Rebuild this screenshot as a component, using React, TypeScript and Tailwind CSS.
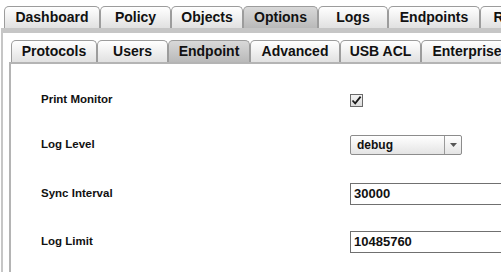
import React from "react";

const top = [
  { t: "Dashboard", w: 96 },
  { t: "Policy", w: 71 },
  { t: "Objects", w: 72 },
  { t: "Options", w: 75, sel: true },
  { t: "Logs", w: 70 },
  { t: "Endpoints", w: 92 },
  { t: "Reports", w: 80 },
];

const sub = [
  { t: "Protocols", w: 86 },
  { t: "Users", w: 71 },
  { t: "Endpoint", w: 82, sel: true },
  { t: "Advanced", w: 90 },
  { t: "USB ACL", w: 81 },
  { t: "Enterprise", w: 92 },
];

function Tab({ t, w, sel }: { t: string; w: number; sel?: boolean }) {
  return (
    <div
      style={{ width: w }}
      className={
        "h-[22px] shrink-0 flex items-center justify-center rounded-t-[5px] border border-b-0 border-[#9c9c9c] text-[14px] font-bold text-[#111] " +
        (sel
          ? "bg-gradient-to-b from-[#d9d9d9] to-[#b9b9b9]"
          : "bg-gradient-to-b from-[#ffffff] to-[#e1e1e1]")
      }
    >
      {t}
    </div>
  );
}

export default function App() {
  return (
    <div className="w-[501px] h-[272px] overflow-hidden bg-white font-['Liberation_Sans',Arial,sans-serif]">
      <div className="w-[760px]">
        <div className="flex pt-[6px] pl-[4px]">
          {top.map((x) => (
            <Tab key={x.t} {...x} />
          ))}
        </div>
        <div className="ml-[1px] border-l-2 border-t-[5px] border-[#c6c6c6] pl-[6px] pt-[7px] h-[260px]">
          <div className="flex pl-[2px]">
            {sub.map((x) => (
              <Tab key={x.t} {...x} />
            ))}
          </div>
          <div className="border-l-2 border-t-2 border-[#b4b4b4] h-[220px] pl-[30px] pt-[24px]">
            <div className="flex flex-col text-[#111]">
              <div className="flex items-center h-[24px]">
                <div className="w-[309px] text-[11.5px] font-bold">Print Monitor</div>
                <div className="w-[13px] h-[13px] border border-[#6a6a6a] bg-gradient-to-b from-[#f4f4f4] to-[#dcdcdc] flex items-center justify-center">
                  <svg width="11" height="11" viewBox="0 0 11 11">
                    <path d="M1.5 5.5 L4.2 8.3 L9.6 1.6" fill="none" stroke="#1a1a1a" strokeWidth="1.8" />
                  </svg>
                </div>
              </div>
              <div className="flex items-center h-[24px] mt-[21px]">
                <div className="w-[309px] text-[11.5px] font-bold">Log Level</div>
                <div className="w-[112px] h-[20px] border border-[#8c8c8c] rounded-[2px] bg-gradient-to-b from-[#ffffff] to-[#e4e4e4] flex items-center">
                  <div className="w-[94px] pl-[6px] text-[12px] font-bold border-r border-[#9a9a9a] h-full flex items-center">debug</div>
                  <div className="flex-1 flex items-center justify-center">
                    <svg width="7" height="4" viewBox="0 0 7 4">
                      <path d="M0 0 L7 0 L3.5 4 Z" fill="#555" />
                    </svg>
                  </div>
                </div>
              </div>
              <div className="flex items-center h-[24px] mt-[25px]">
                <div className="w-[309px] text-[11.5px] font-bold">Sync Interval</div>
                <div className="w-[220px] h-[22px] border border-[#707070] pl-[3px] text-[13px] font-bold flex items-center">30000</div>
              </div>
              <div className="flex items-center h-[24px] mt-[24px]">
                <div className="w-[309px] text-[11.5px] font-bold">Log Limit</div>
                <div className="w-[220px] h-[22px] border border-[#707070] pl-[3px] text-[13px] font-bold flex items-center">10485760</div>
              </div>
            </div>
          </div>
        </div>
      </div>
    </div>
  );
}
